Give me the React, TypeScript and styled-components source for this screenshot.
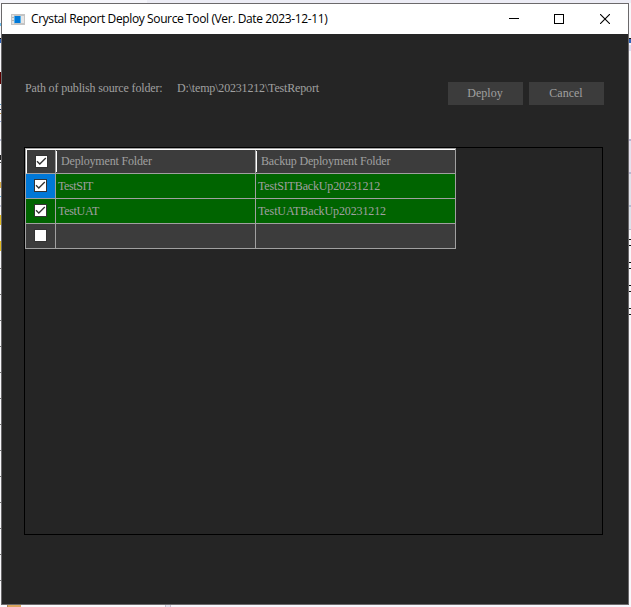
import React from "react";
import styled, { createGlobalStyle } from "styled-components";

const Global = createGlobalStyle`
  * { box-sizing: border-box; }
  html, body { margin: 0; padding: 0; overflow: hidden; }
`;

const mark = (y: number, h: number, c: string) =>
  `linear-gradient(${c}, ${c}) 0 ${y - 3}px / 100% ${h}px no-repeat`;

const leftMarks = [
  mark(23, 3, "#6cc0f0"), mark(38, 1, "#111"), mark(39, 4, "#2f62b8"),
  mark(72, 12, "#5c0000"), mark(104, 1, "#5aa0d0"), mark(109, 1, "#203050"),
  mark(113, 1, "#c09040"), mark(121, 1, "#9ad"), mark(139, 2, "#b9bdd6"),
  mark(155, 5, "#222"), mark(162, 1, "#444"), mark(182, 6, "#dcb04a"),
  mark(196, 1, "#62b0e8"), mark(205, 2, "#c4c8dc"), mark(215, 10, "#e4bc20"),
  mark(241, 10, "#e4bc20"),
  ...Array.from({ length: 13 }, (_, i) => mark(268 + i * 26, 1, "#777")),
].join(",");

const rightMarks = [
  mark(38, 1, "#111"), mark(39, 4, "#2f62b8"), mark(45, 6, "#dcdcf0"),
  mark(139, 2, "#b8b4d0"), mark(141, 31, "#e6e2ee"), mark(172, 2, "#b8b8d0"),
  mark(174, 31, "#e0e2ea"), mark(205, 2, "#b4bcd0"), mark(207, 22, "#dde2ea"),
  mark(229, 1, "#b8b8c8"),
  ...[239, 245, 262, 268, 285, 291, 308, 314].map((y) => mark(y, 1, "#111")),
].join(",");

const Desktop = styled.div`
  width: 631px;
  height: 607px;
  display: grid;
  grid-template: 3px 602px 2px / 1px 628px 2px;
`;
const TopStrip = styled.div`
  grid-column: 1 / -1;
  background: linear-gradient(90deg, #f5f5fb 147px, #ececf5 147px);
`;
const SideStrip = styled.div<{ $marks: string }>`
  background: ${(p) => p.$marks}, #f8f8fb;
`;
const BottomStrip = styled.div`
  grid-column: 1 / -1;
  background: linear-gradient(90deg, #fbf9fc 7px, #a88058 7px 8px, #dca760 8px 21px, #fbf9fc 21px 165px, #c4c0d0 165px 166px, #e4e2ee 166px 170px, #c4c0d0 170px 171px, #f8f6fc 171px);
`;
const Window = styled.main`
  display: flex;
  flex-direction: column;
  border: 1px solid #6b696b;
  background: #252525;
  color: #a0a0a0;
  font: 12px/14px "Liberation Serif", serif;
`;
const TitleBar = styled.header`
  height: 30px;
  flex: none;
  display: flex;
  align-items: center;
  padding-left: 9px;
  background: #fff;
  color: #000;
`;
const Title = styled.h1`
  flex: 1;
  margin: 0 0 0 6px;
  font: 12px/16px "Open Sans", sans-serif;
  letter-spacing: -0.38px;
  white-space: nowrap;
`;
const Caption = styled.button`
  width: 45px;
  height: 30px;
  padding: 0;
  border: 0;
  background: none;
  display: flex;
  align-items: center;
  justify-content: center;
  padding-right: 1px;
  &:last-child { padding-right: 0; }
`;
const Controls = styled.div`
  display: flex;
  padding-right: 1px;
`;
const PathRow = styled.section`
  height: 113px;
  flex: none;
  display: flex;
  align-items: flex-start;
  padding: 47px 24px 0 23px;
`;
const Text = styled.span<{ $track?: number }>`
  letter-spacing: ${(p) => p.$track ?? 0}px;
  white-space: pre;
`;
const Label = styled.div`
  width: 152px;
`;
const PathValue = styled.div`
  flex: 1;
`;
const Actions = styled.div`
  display: flex;
  gap: 6px;
  margin-top: 1px;
`;
const Action = styled.button`
  width: 75px;
  height: 23px;
  padding: 0 1px 2px 0;
  border: 0;
  background: #3c3c3c;
  color: #a0a0a0;
  font: inherit;
`;
const Panel = styled.section`
  width: 579px;
  height: 388px;
  margin-left: 22px;
  border: 1px solid #000;
`;
const Grid = styled.div`
  width: 431px;
  border: 1px solid #a0a0a0;
  border-bottom: 0;
`;
const Row = styled.div<{ $tone: string }>`
  display: grid;
  grid-template-columns: 30px 200px 199px;
  height: 25px;
  background: ${(p) => p.$tone};
`;
const HeadRow = styled(Row)`
  border-top: 1px solid #fff;
`;
const Cell = styled.div<{ $selected?: boolean }>`
  display: flex;
  align-items: center;
  padding: 0 0 1px 2px;
  border-right: 1px solid #a0a0a0;
  border-bottom: 1px solid #a0a0a0;
  background: ${(p) => (p.$selected ? "#0078d7" : "transparent")};
  &:last-child { border-right: 0; }
`;
const CheckCell = styled(Cell)`
  padding: 0 0 1px 8px;
`;
const HeadCheck = styled(CheckCell)`
  padding-bottom: 0;
  border-left: 1px solid #fff;
`;
const HeadCell = styled(Cell)`
  padding: 0;
  ${Text} { margin-bottom: 1px; }
`;
const HeadMark = styled.i`
  width: 1px;
  height: 21px;
  margin-right: 4px;
  background: #fff;
`;

const Check = ({ on = true }: { on?: boolean }) => (
  <svg width="13" height="13" viewBox="0 0 13 13">
    <rect x=".5" y=".5" width="12" height="12" fill="#fff" stroke="#333" />
    {on && <path d="M2 6.2 4.8 9 10.8 3" fill="none" stroke="#333" strokeWidth="1.3" />}
  </svg>
);

const AppIcon = () => (
  <svg width="14" height="11" viewBox="0 0 14 11" shapeRendering="crispEdges">
    <rect width="14" height="11" fill="#c4c4c4" />
    <rect x="1" y="1" width="2" height="9" fill="#e2e2e2" />
    <rect x="1" y="3" width="2" height="1" fill="#b4b4b4" />
    <rect x="1" y="6" width="2" height="1" fill="#b4b4b4" />
    <rect x="3" y="2" width="7" height="7" fill="#55b0ec" />
    <rect x="4" y="2" width="5" height="7" fill="#0078d7" />
    <rect x="10" y="2" width="3" height="7" fill="#e6e6e6" />
  </svg>
);

const rows = [
  { folder: "TestSIT", backup: "TestSITBackUp20231212", ft: -0.4, bt: -0.15, selected: true },
  { folder: "TestUAT", backup: "TestUATBackUp20231212", ft: -0.3, bt: -0.12, selected: false },
];

export default function App() {
  return (
    <>
      <Global />
      <Desktop>
        <TopStrip />
        <SideStrip $marks={leftMarks} />
        <Window>
          <TitleBar>
            <AppIcon />
            <Title>Crystal Report Deploy Source Tool (Ver. Date 2023-12-11)</Title>
            <Controls>
              <Caption aria-label="Minimize">
                <svg width="10" height="10"><path d="M0 4.5H10" stroke="#000" /></svg>
              </Caption>
              <Caption aria-label="Maximize">
                <svg width="10" height="10" shapeRendering="crispEdges"><rect x=".5" y=".5" width="9" height="9" fill="none" stroke="#000" /></svg>
              </Caption>
              <Caption aria-label="Close">
                <svg width="10" height="10"><path d="M0 0 10 10M10 0 0 10" stroke="#000" strokeWidth="1.1" /></svg>
              </Caption>
            </Controls>
          </TitleBar>
          <PathRow>
            <Label><Text $track={-0.15}>Path of publish source folder:</Text></Label>
            <PathValue><Text $track={-0.17}>D:\temp\20231212\TestReport</Text></PathValue>
            <Actions>
              <Action><Text>Deploy</Text></Action>
              <Action><Text>Cancel</Text></Action>
            </Actions>
          </PathRow>
          <Panel>
            <Grid>
              <HeadRow $tone="#3c3c3c">
                <HeadCheck><Check /></HeadCheck>
                <HeadCell><HeadMark /><Text $track={-0.17}>Deployment Folder</Text></HeadCell>
                <HeadCell><HeadMark /><Text $track={-0.17}>Backup Deployment Folder</Text></HeadCell>
              </HeadRow>
              {rows.map((r) => (
                <Row key={r.folder} $tone="#006400">
                  <CheckCell $selected={r.selected}><Check /></CheckCell>
                  <Cell><Text $track={r.ft}>{r.folder}</Text></Cell>
                  <Cell><Text $track={r.bt}>{r.backup}</Text></Cell>
                </Row>
              ))}
              <Row $tone="#3c3c3c">
                <CheckCell><Check on={false} /></CheckCell>
                <Cell />
                <Cell />
              </Row>
            </Grid>
          </Panel>
        </Window>
        <SideStrip $marks={rightMarks} />
        <BottomStrip />
      </Desktop>
    </>
  );
}
